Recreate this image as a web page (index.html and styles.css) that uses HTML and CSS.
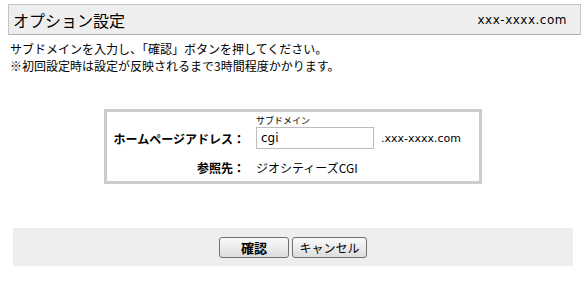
FILE: index.html
```html
<!DOCTYPE html>
<html lang="ja">
<head>
    <meta charset="UTF-8" />
    <title>オプション設定</title>
    <link rel="stylesheet" href="styles.css">
</head>
<body>
<div class="page-header">
    <h1>オプション設定</h1>
    <span class="domain">xxx-xxxx.com</span>
</div>

<p class="desc">
    サブドメインを入力し、「確認」ボタンを押してください。<br>
    ※初回設定時は設定が反映されるまで3時間程度かかります。
</p>

<div class="form-box">
    <div class="form-row">
        <label class="row-label" for="subdomain">ホームページアドレス：</label>
        <div class="field">
            <span class="caption">サブドメイン</span>
            <input type="text" id="subdomain" value="cgi" />
        </div>
        <span class="suffix">.xxx-xxxx.com</span>
    </div>
    <div class="form-row ref-row">
        <span class="row-label">参照先：</span>
        <span class="ref-value">ジオシティーズCGI</span>
    </div>
</div>

<div class="actions">
    <button type="button" class="btn btn-primary">確認</button>
    <button type="button" class="btn">キャンセル</button>
</div>
</body>
</html>
```

FILE: styles.css
```css
body {
    margin: 0;
    padding: 0;
    font-family: 'Noto Sans CJK JP', 'Liberation Sans', sans-serif;
    color: #000;
    background-color: white;
}

.page-header {
    margin: 4px 5px 0 8px;
    height: 31px;
    box-sizing: border-box;
    border: 1px solid #c4c4c4;
    border-bottom-color: #b0b0b0;
    background-color: #eeeeee;
    display: flex;
    align-items: center;
    justify-content: space-between;
    padding: 0 13px 0 4px;
}

h1 {
    margin: 0;
    font-size: 16px;
    font-weight: normal;
}

.domain {
    font-size: 12px;
    font-family: 'DejaVu Sans', sans-serif;
    letter-spacing: 0.5px;
}

.desc {
    margin: 5px 0 0 10px;
    font-size: 12px;
    line-height: 17px;
}

.form-box {
    width: 378px;
    height: 75px;
    box-sizing: border-box;
    margin: 35px auto 0;
    border: 3px solid #cccccc;
    padding-top: 3px;
}

.form-row {
    display: flex;
    align-items: flex-end;
}

.row-label {
    width: 138px;
    flex-shrink: 0;
    text-align: right;
    white-space: nowrap;
    font-size: 12px;
    font-weight: bold;
    line-height: 16px;
    padding-bottom: 2px;
}

.field {
    display: flex;
    flex-direction: column;
    margin-left: 11px;
}

.caption {
    font-size: 9px;
    line-height: 12px;
}

input {
    width: 118px;
    height: 22px;
    box-sizing: border-box;
    border: 1px solid #bdbdbd;
    padding: 0 4px;
    font-size: 12px;
    font-family: 'DejaVu Sans', sans-serif;
}

.suffix {
    margin-left: 7px;
    font-size: 11px;
    font-family: 'DejaVu Sans', sans-serif;
    line-height: 16px;
    padding-bottom: 2px;
}

.ref-row {
    margin-top: 10px;
    align-items: center;
}

.ref-row .row-label {
    padding-bottom: 0;
}

.ref-value {
    margin-left: 11px;
    font-size: 12px;
}

.actions {
    margin: 44px 13px 0;
    height: 38px;
    background-color: #eeeeee;
    display: flex;
    align-items: center;
    justify-content: center;
    gap: 3px;
}

.btn {
    height: 21px;
    padding: 0;
    width: 70px;
    border: 1px solid #707070;
    border-radius: 3px;
    background: linear-gradient(#fafafa, #dddddd);
    font-family: 'Noto Sans CJK JP', sans-serif;
    font-size: 12px;
    line-height: 19px;
    cursor: pointer;
}

.btn + .btn {
    width: 75px;
}

.btn-primary {
    font-weight: bold;
    font-size: 13px;
}
```
